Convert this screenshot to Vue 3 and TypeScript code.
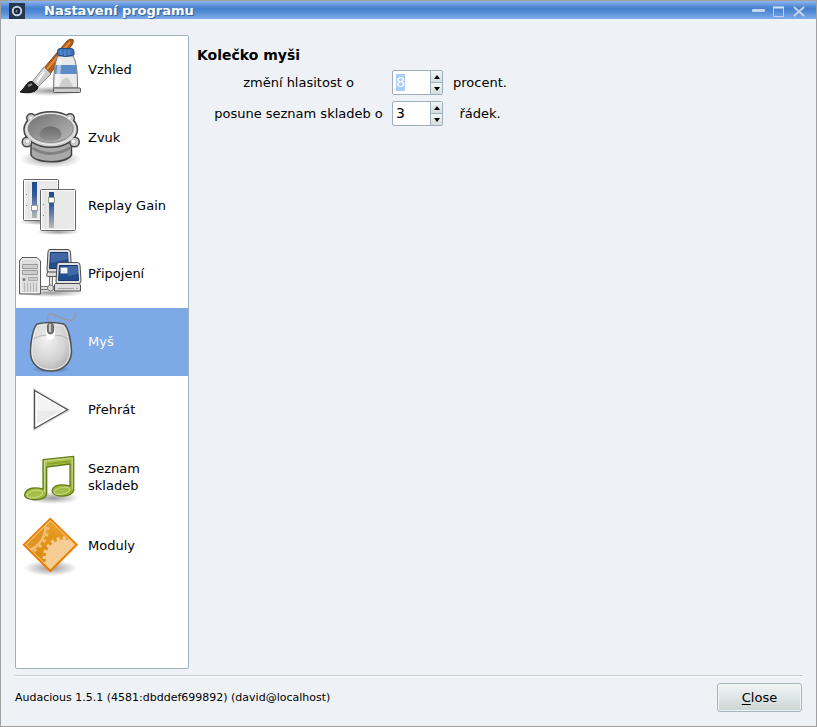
<script setup lang="ts">
import { onMounted, ref } from 'vue'

interface Category {
  id: string
  label: string
}

interface WheelSetting {
  id: string
  before: string
  after: string
  value: number
}

const categories: Category[] = [
  { id: 'look', label: 'Vzhled' },
  { id: 'audio', label: 'Zvuk' },
  { id: 'gain', label: 'Replay Gain' },
  { id: 'network', label: 'Připojení' },
  { id: 'mouse', label: 'Myš' },
  { id: 'play', label: 'Přehrát' },
  { id: 'playlist', label: 'Seznam skladeb' },
  { id: 'plugins', label: 'Moduly' },
]

const active = ref('mouse')
const settings = ref<WheelSetting[]>([
  { id: 'volume', before: 'změní hlasitost o', after: 'procent.', value: 8 },
  { id: 'scroll', before: 'posune seznam skladeb o', after: 'řádek.', value: 3 },
])

function step(setting: WheelSetting, delta: number): void {
  setting.value = Math.max(0, Math.min(100, Number(setting.value) + delta))
}

onMounted(() => {
  const first = document.getElementById('volume') as HTMLInputElement | null
  first?.focus()
  first?.select()
})
</script>

<template>
  <div class="window">
    <svg class="paints" width="0" height="0" aria-hidden="true">
      <defs>
        <linearGradient id="metal" x1="0" x2="1" y1="0" y2="1">
          <stop offset="0" stop-color="#f4f4f4" /><stop offset="1" stop-color="#adadad" />
        </linearGradient>
        <linearGradient id="blue" x1="0" x2="0" y1="0" y2="1">
          <stop offset="0" stop-color="#1f4a8e" /><stop offset=".35" stop-color="#2f599b" /><stop offset="1" stop-color="#b9bdb5" />
        </linearGradient>
        <radialGradient id="shade">
          <stop offset="0" stop-color="#000" stop-opacity=".4" /><stop offset="1" stop-color="#000" stop-opacity="0" />
        </radialGradient>
        <linearGradient id="cone" x1="0" x2="1" y1="0" y2="1">
          <stop offset="0" stop-color="#727272" /><stop offset="1" stop-color="#bababa" />
        </linearGradient>
        <linearGradient id="cap" x1="0" x2="0" y1="0" y2="1">
          <stop offset="0" stop-color="#6c6c6c" /><stop offset="1" stop-color="#929292" />
        </linearGradient>
        <radialGradient id="shell" cx=".4" cy=".35" r=".75">
          <stop offset="0" stop-color="#f2f2f2" /><stop offset=".6" stop-color="#d3d3d3" /><stop offset="1" stop-color="#a9a9a9" />
        </radialGradient>
        <linearGradient id="green" x1="0" x2="1" y1="0" y2="1">
          <stop offset="0" stop-color="#bccf62" /><stop offset="1" stop-color="#92ab2b" />
        </linearGradient>
        <linearGradient id="orange" x1="0" x2="0" y1="0" y2="1">
          <stop offset="0" stop-color="#e9a12e" /><stop offset="1" stop-color="#d98200" />
        </linearGradient>
        <clipPath id="diamond"><path d="M34.300 9L58.500 32.700L34.300 57L10 32.700z" /></clipPath>
      </defs>
    </svg>

    <header class="titlebar">
      <svg class="app-icon" viewBox="0 0 16 16" aria-hidden="true">
        <rect width="16" height="16" fill="#26364e" />
        <circle cx="8" cy="8" r="4.2" fill="#17202e" stroke="#c3d2e8" stroke-width="2" />
        <path d="M6.500 9.500V7.500L8.500 6v3.500z" fill="#71829c" />
      </svg>
      <h1>Nastavení programu</h1>
      <div class="window-buttons">
        <button type="button" aria-label="Minimalizovat">
          <svg viewBox="0 0 20 17"><rect x="3" y="7" width="13" height="3" rx="1" fill="#c4d5ef" /></svg>
        </button>
        <button type="button" aria-label="Maximalizovat">
          <svg viewBox="0 0 20 17"><path d="M4.500 5.500h10v9h-10z" fill="none" stroke="#bdd0ed" /><path d="M4 5.500h11" stroke="#d4e2f7" stroke-width="2" /></svg>
        </button>
        <button type="button" aria-label="Zavřít">
          <svg viewBox="0 0 20 17"><path d="M5 5l10 9M15 5L5 14" stroke="#c3d2ea" stroke-width="2" /></svg>
        </button>
      </div>
    </header>

    <div class="body">
      <div class="columns">
        <nav class="categories">
          <button
            v-for="item in categories"
            :key="item.id"
            type="button"
            class="category"
            :class="{ active: item.id === active }"
            @click="active = item.id"
          >
            <svg class="icon" viewBox="0 0 72 68" aria-hidden="true">
              <g v-if="item.id === 'look'">
                <ellipse cx="35" cy="55" rx="33" ry="5" fill="url(#shade)" />
                <path d="M28 32L51 5Q54 2 57 3.500Q58 6 56 9L34 38z" fill="#b85c17" stroke="#7c4a1c" />
                <path d="M31 33L54 6" stroke="#e08a3e" stroke-width="2" />
                <path d="M28 31L35 38L22 51L16 46z" fill="url(#metal)" stroke="#888" />
                <path d="M28 36L21 46" stroke="#fff" stroke-width="2" />
                <path d="M16 45.500C10 45 9 53 4 56C11 57.500 21 57 22 51z" fill="#222" stroke="#111" />
                <path d="M12 50l4-2" stroke="#888" stroke-width="2" />
                <path d="M42 20H57C61 27 61.500 38 61.500 52H37.500C38 38 38 27 42 20z" fill="#e9e9e9" stroke="#777" />
                <path d="M39.500 29H60.500L61 38H38.500z" fill="#5c8cc6" />
                <path d="M44 23L41 50" stroke="#fff" stroke-width="4" opacity=".5" />
                <path d="M43 51Q50 32 57 51z" fill="#bdbdbd" opacity=".6" />
                <rect x="37.500" y="52" width="27" height="4.500" rx="1" fill="#ccc" stroke="#555" />
                <path d="M41.500 15.500Q41.500 12.500 44 12.500H55Q58 12.500 58 15.500V19Q50 22 41.500 19z" fill="#3e73b7" stroke="#234d88" />
                <path d="M45 14v5M49 14v6M53 14v5" stroke="#6d9bd2" />
              </g>

              <g v-else-if="item.id === 'audio'">
                <ellipse cx="34.500" cy="55" rx="31" ry="9" fill="url(#shade)" />
                <path d="M15 36V51C20 60 50 60 55.500 51V36z" fill="#a9a9a9" stroke="#444" stroke-width="1.500" />
                <path d="M16.500 44Q34 55 54 44" fill="none" stroke="#828282" stroke-width="3" />
                <g fill="#cfcfcf" stroke="#444" stroke-width="3">
                  <circle cx="15" cy="14" r="3.500" /><circle cx="54" cy="14" r="3.500" />
                  <circle cx="11" cy="38" r="4" /><circle cx="58.500" cy="38" r="4" />
                  <ellipse cx="34.700" cy="25.500" rx="26" ry="17" />
                </g>
                <g fill="#cfcfcf">
                  <circle cx="15" cy="14" r="3.500" /><circle cx="54" cy="14" r="3.500" />
                  <circle cx="11" cy="38" r="4" /><circle cx="58.500" cy="38" r="4" />
                  <ellipse cx="34.700" cy="25.500" rx="26" ry="17" />
                </g>
                <ellipse cx="34.700" cy="25" rx="24.500" ry="15.500" fill="none" stroke="#eee" />
                <ellipse cx="34.700" cy="24.500" rx="22.500" ry="14" fill="url(#cone)" stroke="#858585" />
                <path d="M23.500 30C25 20 44 20 45.500 30Q46 36 34.500 37Q23 36 23.500 30z" fill="url(#cap)" />
                <g fill="#f4f4f4" stroke="#b5b5b5" stroke-width=".7">
                  <circle cx="15" cy="14" r="2" /><circle cx="53.500" cy="14" r="2" />
                  <circle cx="11.500" cy="37.500" r="2.300" /><circle cx="57.500" cy="37.500" r="2.300" />
                </g>
              </g>

              <g v-else-if="item.id === 'gain'">
                <ellipse cx="25" cy="50" rx="22" ry="3" fill="url(#shade)" />
                <ellipse cx="42" cy="60" rx="22" ry="3" fill="url(#shade)" />
                <g v-for="(panel, n) in [{ x: 7, y: 7, knob: 26 }, { x: 24, y: 17, knob: 8 }]" :key="n" :transform="`translate(${panel.x} ${panel.y})`">
                  <rect x=".5" y=".5" width="35" height="41" rx="1" fill="#e9e9e9" stroke="#666" />
                  <rect x="1.500" y="1.500" width="33" height="39" fill="none" stroke="#fff" />
                  <path d="M5.500 3v36" stroke="#dedede" />
                  <rect x="9" y="3" width="5" height="36" fill="url(#blue)" />
                  <rect x="8.500" :y="panel.knob + .5" width="6" height="5" fill="#fff" stroke="#9a9d96" />
                  <path d="M3 15.500h1M3 26.500h1" stroke="#888" />
                </g>
              </g>

              <g v-else-if="item.id === 'network'">
                <ellipse cx="35" cy="53" rx="34" ry="4" fill="url(#shade)" />
                <path d="M6 17.500H21L24.500 21V54H3.500V21z" fill="#ddd" stroke="#595959" />
                <path d="M6.500 19H20.500L23 22V52.500H5V22z" fill="none" stroke="#f5f5f5" />
                <path d="M6.500 24.500H21.500V28.500H6.500zM6.500 30.500H21.500V34.500H6.500z" fill="#cdcdcd" stroke="#9c9c9c" />
                <path d="M12.500 37.500h9v3h-9z" fill="#ccc" stroke="#aaa" /><circle cx="8" cy="39.500" r="1.500" fill="#777" />
                <path d="M8.500 43v9M11.500 43v9M14.500 43v9M17.500 43v9M20.500 43v9" stroke="#b5b5b5" />
                <path d="M25 48H40M35 36V46" stroke="#777" stroke-width="4" /><path d="M25 48H40M35 36V47" stroke="#ddd" stroke-width="2" />
                <circle cx="34.500" cy="48" r="3" fill="#ddd" stroke="#777" />
                <path d="M32 31H55V36.500H32Q30.500 36.500 30.500 35z" fill="#ddd" stroke="#555" />
                <path d="M34 9.500H52Q54 9.500 54.500 12L55.500 30Q55 32 53 32H33Q30.500 32 31 29L32 12Q32 9.500 34 9.500z" fill="#ddd" stroke="#4b4b4b" />
                <path d="M34.500 12.500H51.500L52.500 28.500H33.500z" fill="#234d8f" stroke="#17366d" />
                <path d="M35 13H51.500V19L34.500 23z" fill="#4169a5" />
                <path d="M39.500 43.500H63Q64.500 44 64.500 46V51H38.500V46Q38.500 44 39.500 43.500z" fill="#ddd" stroke="#4b4b4b" />
                <path d="M43 22.500H61.500Q63.500 22.500 64 25L65 41Q65 43.500 62.500 43.500H42Q39.500 43.500 40 41L41 25Q41 22.500 43 22.500z" fill="#e2e2e2" stroke="#4b4b4b" />
                <path d="M43.500 25.500H61.500L62.500 40.500H42.500z" fill="#234d8f" stroke="#17366d" />
                <path d="M52 26H61.500L62 34L52 36z" fill="#4169a5" /><path d="M44.500 27.500h7v6h-7z" fill="#f5f5f5" />
                <path d="M42 48.500h16M60 48.500h2" stroke="#a5a5a5" />
              </g>

              <g v-else-if="item.id === 'mouse'">
                <path d="M33.500 17C28 3 35 5 41 8C47 10 51 14 56 12C60 10 60 7 59 4" fill="none" stroke="#989ca2" stroke-width="1.500" />
                <ellipse cx="35" cy="61" rx="20" ry="4" fill="url(#shade)" />
                <path d="M21 16Q34 13 48 16C53 20 55.500 36 55.500 44C55 56 46 63 35 63C23 63 14.500 56 14.500 44C14.500 34 17 20 21 16z" fill="url(#shell)" stroke="#505354" stroke-width="1.500" />
                <path d="M22 17.500Q34 15 47 17.500C51 22 54 37 54 44C53 55 45 61.500 35 61.500C24 61.500 16 55 16 44C16 35 18 22 22 17.500z" fill="none" stroke="#ebebeb" />
                <path d="M17.500 31Q23 27 31 27M52.500 31Q47 27 38 27" fill="none" stroke="#b5b5b5" />
                <ellipse cx="34.500" cy="25" rx="4.500" ry="7" fill="#fff" />
                <rect x="31.500" y="15" width="6" height="11" rx="3" fill="#777" stroke="#666" />
                <path d="M34 16v8" stroke="#c9c9c9" stroke-width="2" />
              </g>

              <g v-else-if="item.id === 'play'">
                <path d="M18.500 14L52 34L18.500 53z" fill="none" stroke="#ddd" stroke-width="3" />
                <path d="M18.500 14.500L51.500 33.800L18.500 52.500z" fill="#e9ebe9" stroke="#505050" stroke-width="1.300" />
                <path d="M20.500 17.500L48.500 33.800L20.500 49.500z" fill="none" stroke="#fff" stroke-width="1.500" />
                <path d="M21 35Q34 35 47 33.500L21 18.500z" fill="#f5f6f5" opacity=".8" />
              </g>

              <g v-else-if="item.id === 'playlist'">
                <ellipse cx="37" cy="54" rx="27" ry="6" fill="url(#shade)" />
                <path d="M27 15.700L57.700 12.300V46.500C56 54 37 54 36 47C37 40 47 40 54 42V20L30.700 23V50C29 58 9 57 8.500 51C10 43 20 43 27 45z" fill="url(#green)" stroke="#647c1c" stroke-width="1.300" stroke-linejoin="round" />
                <path d="M28.500 17L56.300 14V45M28.500 17V48" fill="none" stroke="#cbd98a" />
                <path d="M31 20L54 17.500" stroke="#8fa527" stroke-width="2" />
                <ellipse cx="19" cy="50" rx="8" ry="3.500" transform="rotate(-12 19 50)" fill="#a6bd48" stroke="#cbd98a" />
                <ellipse cx="46" cy="46.800" rx="8" ry="3.500" transform="rotate(-12 46 46.800)" fill="#a6bd48" stroke="#cbd98a" />
              </g>

              <g v-else>
                <ellipse cx="34.500" cy="56" rx="27" ry="8" fill="url(#shade)" />
                <path d="M34.300 6.500L61 32.700L34.300 59.500L7.500 32.700z" fill="url(#orange)" stroke="#f57900" stroke-width="1.500" />
                <g clip-path="url(#diamond)">
                  <circle cx="5" cy="15" r="24.500" fill="#e09524" stroke="#f3be74" stroke-width="2.500" />
                  <circle cx="5" cy="15" r="27" fill="none" stroke="#f3be74" stroke-width="3" stroke-dasharray="3 3.500" />
                  <circle cx="48" cy="46" r="18.500" fill="#f6cd94" />
                  <circle cx="48" cy="46" r="19.500" fill="none" stroke="#f6cd94" stroke-width="4" stroke-dasharray="3 3" />
                </g>
                <path d="M34.300 8.800L58.600 32.700L34.300 57L10 32.700z" fill="none" stroke="#f9d094" />
              </g>
            </svg>
            <span>{{ item.label }}</span>
          </button>
        </nav>

        <main class="page">
          <h2>Kolečko myši</h2>
          <div class="wheel">
            <template v-for="setting in settings" :key="setting.id">
              <label :for="setting.id">{{ setting.before }}</label>
              <div class="spin">
                <input :id="setting.id" v-model="setting.value" type="text" inputmode="numeric" />
                <div class="arrows">
                  <button type="button" aria-label="Zvýšit" @click="step(setting, 1)">
                    <svg viewBox="0 0 6 4"><path d="M0 4L3 0L6 4z" /></svg>
                  </button>
                  <button type="button" aria-label="Snížit" @click="step(setting, -1)">
                    <svg viewBox="0 0 6 4"><path d="M0 0L3 4L6 0z" /></svg>
                  </button>
                </div>
              </div>
              <span>{{ setting.after }}</span>
            </template>
          </div>
        </main>
      </div>

      <footer class="footer">
        <span>Audacious 1.5.1 (4581:dbddef699892) (david@localhost)</span>
        <button type="button" class="close"><u>C</u>lose</button>
      </footer>
    </div>
  </div>
</template>

<style>
body {
  margin: 0;
}
</style>

<style scoped>
* {
  box-sizing: border-box;
}

.window {
  display: flex;
  flex-direction: column;
  min-height: 100vh;
  border: 1px solid #a0a0a0;
  background: #eef2f7;
  color: #000;
  font: 13px/17px "DejaVu Sans", sans-serif;
}

.paints {
  position: absolute;
}

button,
input {
  margin: 0;
  padding: 0;
  border: 0;
  color: inherit;
  font: inherit;
}

.titlebar {
  display: flex;
  align-items: center;
  height: 18px;
  padding: 0 7px 0 8px;
  background: linear-gradient(#8fb4ee, #4480cd 40%, #4c87d3 55%, #7fabe9);
}

.app-icon {
  width: 16px;
  height: 16px;
  margin-top: 2px;
}

h1 {
  flex: 1;
  margin: 0 0 0 19px;
  padding-top: 2px;
  color: #fff;
  font-size: 13px;
  line-height: 18px;
  text-shadow: 1px 1px 1px #31609e;
}

.window-buttons {
  display: flex;
}

.window-buttons button {
  width: 20px;
  height: 17px;
  background: none;
}

.window-buttons svg {
  display: block;
  width: 20px;
  height: 17px;
}

.body {
  flex: 1;
  display: flex;
  flex-direction: column;
  padding: 16px 14px 14px;
}

.columns {
  flex: 1;
  display: flex;
  gap: 8px;
}

.categories {
  width: 174px;
  border: 1px solid #9cafc0;
  border-radius: 2px;
  background: #fff;
}

.category {
  display: flex;
  align-items: center;
  width: 100%;
  height: 68px;
  background: #fff;
  text-align: left;
}

.category span {
  flex: 1;
  padding: 0 16px 2px 0;
}

.category.active {
  background: #7da9e7;
  color: #fff;
}

.icon {
  flex: none;
  width: 72px;
  height: 68px;
}

.page {
  flex: 1;
  padding-top: 11px;
}

h2 {
  margin: 0;
  font-size: 14px;
  line-height: 18px;
}

.wheel {
  display: grid;
  grid-template-columns: minmax(171px, max-content) max-content minmax(58px, max-content);
  justify-content: start;
  align-items: center;
  justify-items: center;
  gap: 6px 8px;
  padding: 6px 0 0 16px;
}

.spin {
  display: flex;
  width: 51px;
  height: 25px;
  border: 1px solid #9cafba;
  border-radius: 2px;
  background: #fff;
}

.spin input {
  flex: 1;
  width: 0;
  padding-left: 3px;
  background: transparent;
  font-size: 14px;
  outline: none;
}

.spin input::selection {
  background: #a9ccfb;
  color: #fff;
}

.arrows {
  display: flex;
  flex-direction: column;
  width: 12px;
  border-left: 1px solid #9cafba;
}

.arrows button {
  flex: 1;
  display: flex;
  align-items: center;
  justify-content: center;
  background: linear-gradient(#f1f5f6, #d5dddd);
}

.arrows button + button {
  border-top: 1px solid #9cafba;
}

.arrows svg {
  width: 6px;
  height: 4px;
}

.footer {
  display: flex;
  align-items: center;
  justify-content: space-between;
  margin-top: 6px;
  padding-top: 7px;
  border-top: 1px solid #c3cccf;
  box-shadow: inset 0 1px #fff;
  font-size: 11px;
}

.close {
  width: 85px;
  height: 29px;
  border: 1px solid #a5b5bd;
  border-radius: 3px;
  background: linear-gradient(#f0f5f6, #ccd5d5);
  box-shadow: inset 0 0 0 1px #f0f4f5;
  font-size: 13px;
}

.close u {
  text-underline-offset: 2px;
}
</style>
